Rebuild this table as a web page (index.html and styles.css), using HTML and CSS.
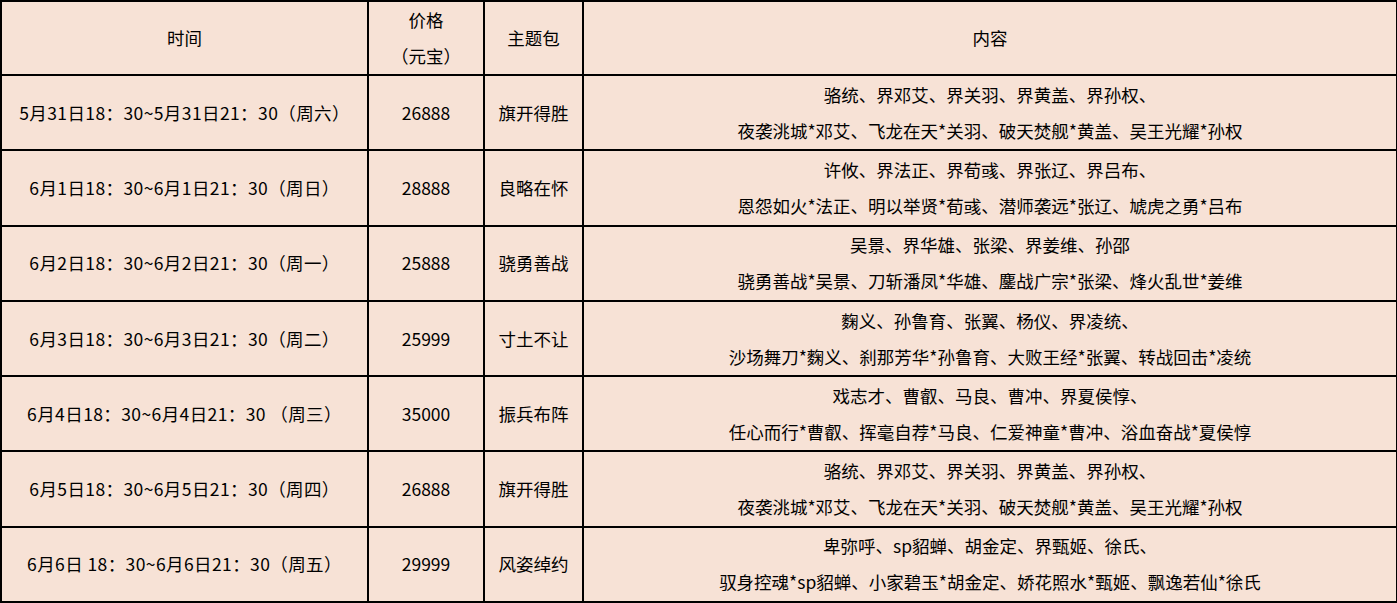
FILE: index.html
```html
<!DOCTYPE html>
<html lang="zh-CN">
<head>
<meta charset="utf-8">
<title>主题包</title>
<link rel="stylesheet" href="styles.css">
</head>
<body>
<table class="schedule">
  <colgroup>
    <col class="c-time">
    <col class="c-price">
    <col class="c-pack">
    <col class="c-content">
  </colgroup>
  <thead>
    <tr class="head-row">
      <th>时间</th>
      <th>价格<br>（元宝）</th>
      <th>主题包</th>
      <th>内容</th>
    </tr>
  </thead>
  <tbody>
    <tr>
      <td class="time">5月31日18：30~5月31日21：30（周六）</td>
      <td>26888</td>
      <td>旗开得胜</td>
      <td>骆统、界邓艾、界关羽、界黄盖、界孙权、<br>夜袭洮城*邓艾、飞龙在天*关羽、破天焚舰*黄盖、吴王光耀*孙权</td>
    </tr>
    <tr>
      <td class="time">6月1日18：30~6月1日21：30（周日）</td>
      <td>28888</td>
      <td>良略在怀</td>
      <td>许攸、界法正、界荀彧、界张辽、界吕布、<br>恩怨如火*法正、明以举贤*荀彧、潜师袭远*张辽、虓虎之勇*吕布</td>
    </tr>
    <tr>
      <td class="time">6月2日18：30~6月2日21：30（周一）</td>
      <td>25888</td>
      <td>骁勇善战</td>
      <td>吴景、界华雄、张梁、界姜维、孙邵<br>骁勇善战*吴景、刀斩潘凤*华雄、鏖战广宗*张梁、烽火乱世*姜维</td>
    </tr>
    <tr>
      <td class="time">6月3日18：30~6月3日21：30（周二）</td>
      <td>25999</td>
      <td>寸土不让</td>
      <td>麴义、孙鲁育、张翼、杨仪、界凌统、<br>沙场舞刀*麴义、刹那芳华*孙鲁育、大败王经*张翼、转战回击*凌统</td>
    </tr>
    <tr>
      <td class="time">6月4日18：30~6月4日21：30 （周三）</td>
      <td>35000</td>
      <td>振兵布阵</td>
      <td>戏志才、曹叡、马良、曹冲、界夏侯惇、<br>任心而行*曹叡、挥毫自荐*马良、仁爱神童*曹冲、浴血奋战*夏侯惇</td>
    </tr>
    <tr>
      <td class="time">6月5日18：30~6月5日21：30（周四）</td>
      <td>26888</td>
      <td>旗开得胜</td>
      <td>骆统、界邓艾、界关羽、界黄盖、界孙权、<br>夜袭洮城*邓艾、飞龙在天*关羽、破天焚舰*黄盖、吴王光耀*孙权</td>
    </tr>
    <tr>
      <td class="time">6月6日 18：30~6月6日21：30（周五）</td>
      <td>29999</td>
      <td>风姿绰约</td>
      <td>卑弥呼、sp貂蝉、胡金定、界甄姬、徐氏、<br>驭身控魂*sp貂蝉、小家碧玉*胡金定、娇花照水*甄姬、飘逸若仙*徐氏</td>
    </tr>
  </tbody>
</table>
</body>
</html>
```

FILE: styles.css
```css
html, body {
  margin: 0;
  padding: 0;
  background: #ffffff;
}

body {
  font-family: "Noto Sans CJK SC", "Microsoft YaHei", "Noto Sans", sans-serif;
  font-size: 17.5px;
  color: #000;
}

.schedule {
  border-collapse: collapse;
  table-layout: fixed;
  width: 1396px;
  background: #f7e2d6;
  border-bottom: 2px solid #000;
  box-shadow: 0 1px 0 #9a9a9a;
}

.c-time { width: 367px; }
.c-price { width: 116px; }
.c-pack { width: 99px; }
.c-content { width: 814px; }

.schedule th,
.schedule td {
  border: 2px solid #000;
  padding: 0;
  text-align: center;
  vertical-align: middle;
  font-weight: normal;
  line-height: 36px;
  height: 73.3px;
  white-space: nowrap;
}

.schedule .head-row th {
  height: 72px;
}

.schedule .time {
  letter-spacing: 0.4px;
}
```
